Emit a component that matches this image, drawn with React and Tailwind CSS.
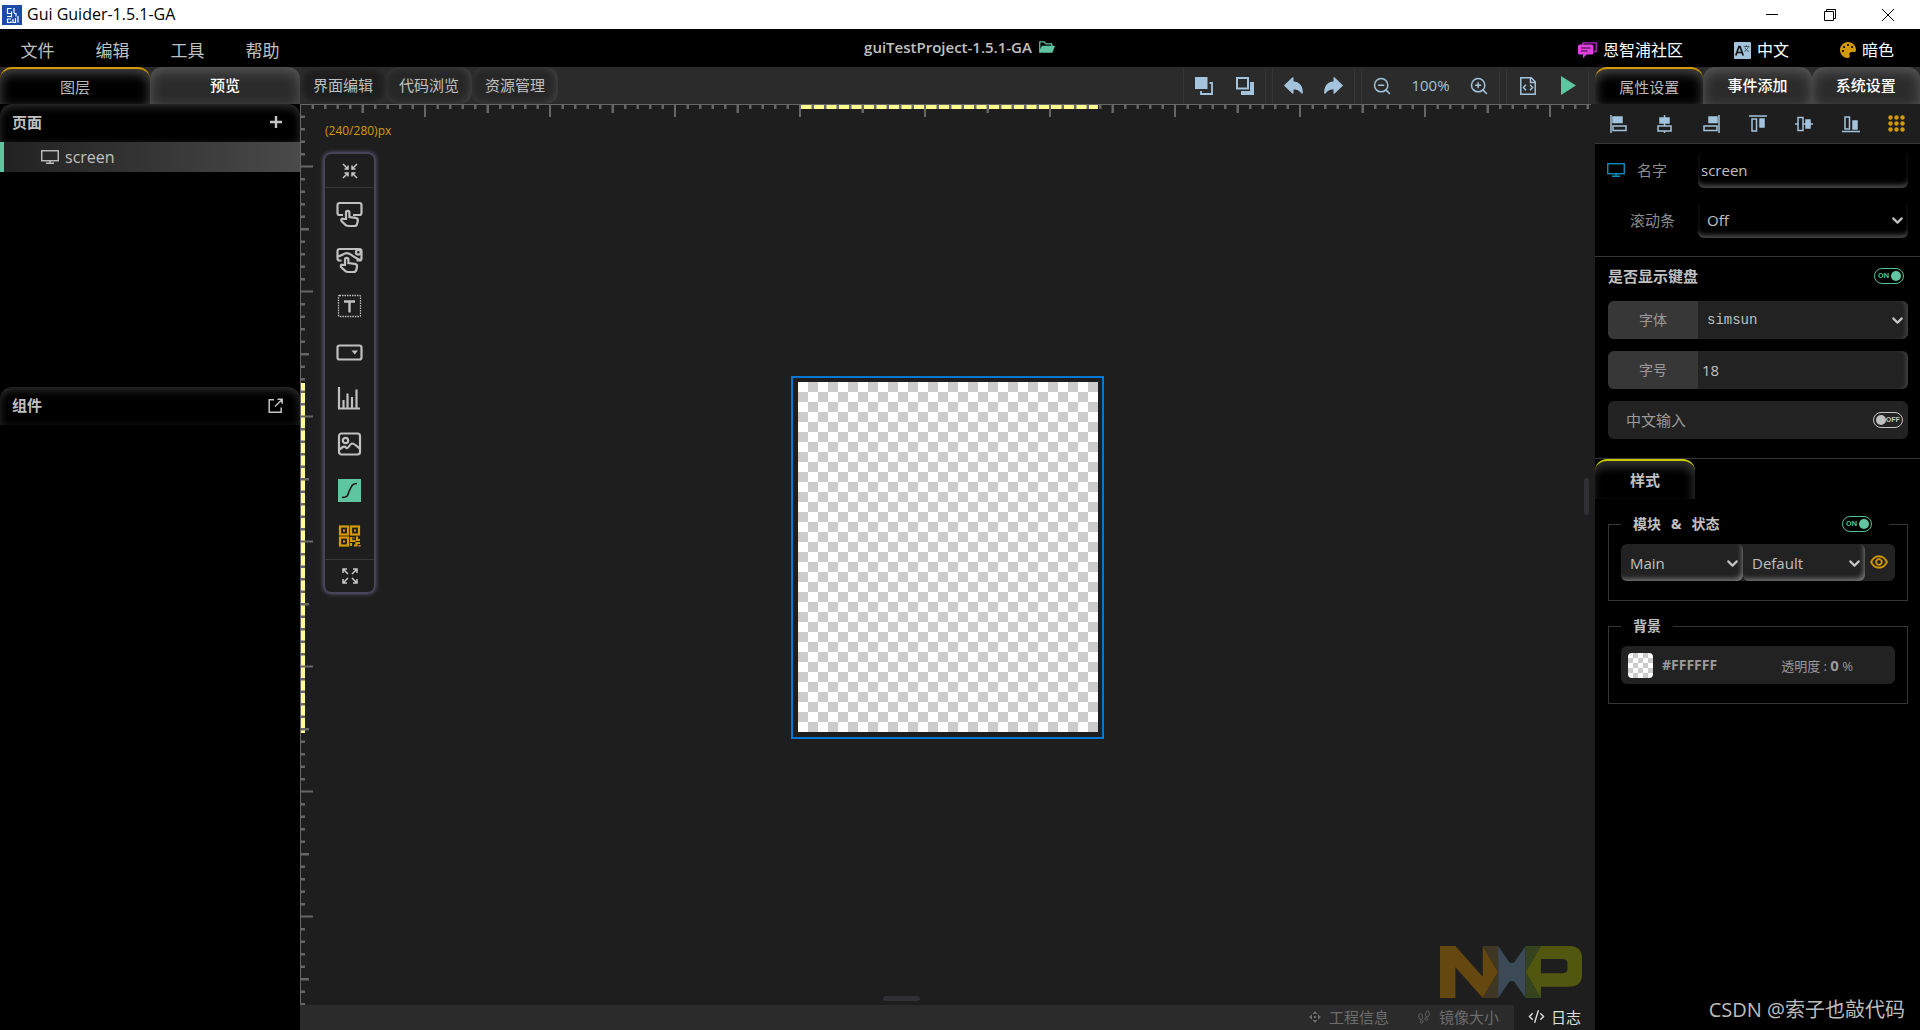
import React, { useState } from 'react';
import { FaPalette } from 'react-icons/fa';
import { AiFillFolderOpen, AiOutlineEye } from 'react-icons/ai';
import { IoArrowUndo, IoArrowRedo, IoFootstepsOutline } from 'react-icons/io5';
import { ChevronDown, CodeXml, ZoomIn, ZoomOut } from 'lucide-react';

const checker = 'bg-[repeating-conic-gradient(#cccccc_0_25%,#ffffff_0_50%)]';

const MonitorIcon = ({ className }) => (
  <svg className={className} width="18" height="14" viewBox="0 0 18 14" fill="none" stroke="currentColor">
    <rect x="0.75" y="0.75" width="16.5" height="10" strokeWidth="1.4" />
    <path d="M9 11v2M5 13.3h8" strokeWidth="1.4" />
  </svg>
);

const ChatIcon = () => (
  <svg width="19" height="17" viewBox="0 0 19 17">
    <path d="M5 3V.8h13.2v8.7H16" fill="none" stroke="#c026d3" strokeWidth="1.3" />
    <path d="M1.500 2.500h12.500a1.500 1.500 0 0 1 1.500 1.500v7a1.500 1.500 0 0 1-1.500 1.500H8.500L5 16.200v-3.700H1.500A1.500 1.500 0 0 1 0 11V4a1.500 1.500 0 0 1 1.500-1.500z" fill="#e040e0" />
    <path d="M3 6h9.500M3 9h6.500" stroke="#2b0a2b" strokeWidth="1.200" />
  </svg>
);

const LanguageIcon = () => (
  <svg width="17" height="17" viewBox="0 0 17 17">
    <rect width="17" height="17" rx="1" fill="#a3c4dc" />
    <path d="M1.800 13.500 5 4.500h1l3.200 9M3 10.500h5" fill="none" stroke="#111" strokeWidth="1.700" />
    <path d="M9.500 4.500h6M12.500 3v1.500M14.500 4.500c-.8 2.500-2 4-4.300 5M10.800 5.500c.8 2 2.300 3.300 4.500 4" fill="none" stroke="#33424d" strokeWidth=".8" />
  </svg>
);

const AppIcon = () => (
  <svg width="20" height="20" viewBox="0 0 20 20">
    <rect width="20" height="20" fill="#1c4aa8" />
    <path d="M9.500 3.500H5.500v5h4v-2M5 11.500h4.500M9.500 8.500v4M12 3v5M12 8.500h2v3M9 14H5.500v3.500H9V16M11 14v3.500h2.500V13M16 11v6.500" fill="none" stroke="#fff" strokeWidth="1.200" />
  </svg>
);

const ToFront = () => (
  <svg width="18" height="18" viewBox="0 0 18 18">
    <path d="M14.500 6H17v11H6v-3" fill="none" stroke="#a3c4dc" strokeWidth="1.800" />
    <rect width="12.500" height="12" fill="#a3c4dc" />
  </svg>
);

const ToBack = () => (
  <svg width="18" height="18" viewBox="0 0 18 18">
    <path d="M14 5h4v13H5v-4h9z" fill="#a3c4dc" />
    <rect x="1" y="1" width="11" height="10.500" fill="#2b2b2b" stroke="#a3c4dc" strokeWidth="2" />
  </svg>
);

const FileCodeIcon = () => (
  <svg width="16" height="18" viewBox="0 0 16 18" fill="none" stroke="#a3c4dc" strokeWidth="1.500">
    <path d="M.8.8h10.400l4 4v12.400H.8zM10.500 1v4.500H15M6 7.800 3.500 10.500 6 13.200M10 7.800l2.500 2.700L10 13.200" />
  </svg>
);

const ExportIcon = () => (
  <svg width="15" height="15" viewBox="0 0 15 15" fill="none" stroke="#c4c4c4" strokeWidth="1.500">
    <path d="M6 1.800H1.200v12.400h12V9.500M7 8.500 13.500 2M9.500 1.200h4.700v4.500" />
  </svg>
);

/* alignment icons of the property panel */
const alignIcons = [
  { id: 'left', draw: <><path d="M1 0v18" /><rect x="3" y="2" width="9" height="5.500" fill="currentColor" /><rect x="3" y="11" width="13" height="4.500" /></> },
  { id: 'hcenter', draw: <><path d="M8.500 0v3M8.500 8v3M8.500 16v2" /><rect x="4" y="3" width="9" height="5" fill="currentColor" /><rect x="2" y="11" width="13" height="5" /></> },
  { id: 'right', draw: <><path d="M16 0v18" /><rect x="6" y="2" width="8" height="5.500" fill="currentColor" /><rect x="1" y="11" width="13" height="4.500" /></> },
  { id: 'top', draw: <><path d="M0 1h18" /><rect x="3" y="4" width="4.500" height="12" /><rect x="11" y="4" width="4" height="8" fill="currentColor" /></> },
  { id: 'vcenter', draw: <><path d="M0 9h3M8 9h3M15 9h3" /><rect x="3" y="2.500" width="5" height="13" /><rect x="11" y="5" width="4" height="8" fill="currentColor" /></> },
  { id: 'bottom', draw: <><path d="M0 16.500h18" /><rect x="3" y="2" width="4.500" height="12" /><rect x="11" y="6" width="4" height="8" fill="currentColor" /></> },
];

const widgetIcons = [
  { id: 'button', label: 'Button', draw: <><path d="M7 14H3.500a2 2 0 0 1-2-2V4a2 2 0 0 1 2-2h20a2 2 0 0 1 2 2v8a2 2 0 0 1-2 2H17" /><path d="M10 18V11.500a1.700 1.700 0 0 1 3.400 0v4.500l6.200.8c2 .3 2.400 1.600 2.200 3l-.6 2.700c-.3 1.600-1.200 2.500-2.700 2.500h-6c-2 0-3-.6-4-2L5.500 20c-1-1.500.6-2.800 2-2z" /></> },
  { id: 'imgbtn', label: 'Image button', draw: <><path d="M5.500 13.500H3.500a2 2 0 0 1-2-2V4a2 2 0 0 1 2-2h20a2 2 0 0 1 2 2v7.500a2 2 0 0 1-2 2H20.500M2 9.500c3.500-.5 6-3.500 9-3.300 4.500.3 8.500 6 14 6.800" /><circle cx="22.300" cy="5.300" r="2.400" /><path d="M9 18V12.500a1.700 1.700 0 0 1 3.400 0V16l6.400.8c2 .3 2.400 1.600 2.200 3l-.6 2.700c-.3 1.600-1.200 2.500-2.700 2.500h-5.500c-2 0-3-.6-4-2L5 20c-1-1.500.6-2.800 2-2z" /></> },
  { id: 'label', label: 'Label', draw: <><rect x="2.500" y="2.500" width="22" height="21" strokeWidth="1.300" strokeDasharray="1.500 1" rx="1" /><path d="M8 8.500h11M13.500 8.500V19.500" strokeWidth="2.400" /></> },
  { id: 'dropdown', label: 'Drop-down', draw: <><rect x="1.500" y="6.500" width="24" height="14" rx="2" /><path d="M15.500 11.500h6.500l-3.200 4z" fill="currentColor" stroke="none" /></> },
  { id: 'chart', label: 'Chart', draw: <path d="M3 2v21M2 23.500h22M7.500 23v-8M11.500 23V8.500M16 23V12M20.500 23V4.500" /> },
  { id: 'image', label: 'Image', draw: <><rect x="3" y="2.500" width="21" height="21" rx="2.500" /><circle cx="9.500" cy="9.500" r="2.700" /><path d="M4 18.500c2-2.500 4.500-4 6.500-1.500 2 1 3-4 5.500-4.500 2.500-.3 5 3 7.500 5" /></> },
  { id: 'line', label: 'Line', draw: <><rect x="2" y="2" width="23" height="23" fill="#5fc4a0" stroke="none" /><path d="M6 20.500c7 0 5.500-3.500 7.500-7s2-7 7.500-7" stroke="#111" strokeWidth="1.500" /></> },
  {
    id: 'qrcode', label: 'QR code', draw: (
      <g stroke="#d49a06">
        <rect x="4" y="3.500" width="8" height="8" /><rect x="15" y="3.500" width="8" height="8" /><rect x="4" y="14.500" width="8" height="8" />
        <path d="M7 7.500h2M18 7.500h2M7 18.500h2M15 14v4h4.500M17.500 14.500v1M21 13.500v3.500h3M15 23v-3M18 22.500h2.500v-2.500H24M23.500 23.500v-1.500" />
      </g>
    ),
  },
];

const ArrowsIn = () => (
  <svg width="16" height="16" viewBox="0 0 16 16" fill="none" stroke="#c8c8c8" strokeWidth="1.500">
    <path d="M1 1l4.500 4.500M15 1l-4.500 4.500M1 15l4.500-4.500M15 15l-4.500-4.500M2.500 6H6V2.500M13.500 6H10V2.500M2.500 10H6v3.500M13.500 10H10v3.500" />
  </svg>
);

const ArrowsOut = () => (
  <svg width="16" height="16" viewBox="0 0 16 16" fill="none" stroke="#c8c8c8" strokeWidth="1.500">
    <path d="M1.500 1.500 6 6M14.500 1.500 10 6M1.500 14.500 6 10M14.500 14.500 10 10M1 5V1h4M11 1h4v4M1 11v4h4M15 11v4h-4" />
  </svg>
);

const NxpLogo = () => (
  <svg className="absolute right-[13px] bottom-[7px]" width="142" height="52" viewBox="445 78 332 156" preserveAspectRatio="none">
    <path d="M445 78h36l64 92V78l36 78-36 78-64-92v92h-36z" fill="#64480f" />
    <path d="M545 78h36v78zM545 234l36-78v78z" fill="#403624" />
    <path d="M581 78l27 50h10l27-50v156l-27-50h-10l-27 50z" fill="#3c4a58" />
    <path d="M645 78h36l-36 78zM645 156l36 78h-36z" fill="#35441f" />
    <path fillRule="evenodd" d="M681 78h65q31 0 31 36v50q0 36-31 36h-65v34l-36-78zM681 117v43h48q14 0 14-12v-19q0-12-14-12z" fill="#525710" />
  </svg>
);

const tickSize = (i) => (i % 10 === 0 ? 13 : i % 5 === 0 ? 9 : 5);

const Rulers = () => (
  <>
    <svg className="absolute top-0 left-0 w-[calc(100%-4px)] h-3.5">
      <rect width="100%" height="1" fill="#666" />
      <rect x="499" y="1" width="299" height="4" fill="#fffe8c" />
      {Array.from({ length: 160 }, (_, i) => i + 1).map((i) => (
        <rect key={i} x={i * 12.5 - 1} y="0" width={i % 10 === 0 ? 2 : 2.5} height={tickSize(i)} fill="#666" />
      ))}
    </svg>
    <svg className="absolute top-0 left-0 w-3.5 h-full">
      <rect width="1" height="100%" fill="#666" />
      <rect x="1" y="279" width="4" height="350" fill="#fffe8c" />
      {Array.from({ length: 160 }, (_, i) => i + 1).map((i) => (
        <rect key={i} x="0" y={i * 12.5 - 1} width={tickSize(i + 5)} height={(i + 5) % 10 === 0 ? 2 : 2.5} fill="#666" />
      ))}
    </svg>
  </>
);

const Toggle = ({ label, checked, onChange }) => (
  <label className="relative block w-[30px] h-4 shrink-0 cursor-pointer font-[Roboto,sans-serif] text-[8px] leading-none font-semibold">
    <input type="checkbox" aria-label={label} checked={checked} onChange={onChange} className="absolute inset-0 opacity-0" />
    {checked ? (
      <span className="flex items-center justify-between h-4 rounded-full border border-[#4cc490] pl-[3px] pr-0.5 text-[#4cc490]">
        ON
        <span className="size-2.5 rounded-full bg-[#5fc4a0]" />
      </span>
    ) : (
      <span className="flex items-center justify-between h-4 rounded-full border border-[#c4c4c4] px-0.5 text-[#c4c4c4]">
        <span className="size-2.5 rounded-full bg-[#c0c0c0]" />
        OFF
      </span>
    )}
  </label>
);

const Select = ({ id, label, options, className }) => (
  <div className="relative flex-1 min-w-0 h-full">
    <select id={id} aria-label={label} className={`appearance-none w-full h-full bg-transparent pl-[9px] pr-6 text-[#c0c0c0] outline-none ${className}`}>
      {options.map((o) => <option key={o}>{o}</option>)}
    </select>
    <ChevronDown size={17} strokeWidth={3} className="absolute right-0.5 top-1/2 -mt-2 text-[#c4c4c4] pointer-events-none" />
  </div>
);

const SideTab = ({ active, onClick, children }) => (
  <button
    onClick={onClick}
    className={`flex-1 h-[37px] rounded-t-xl text-[15px] leading-5 ${active ? 'border-t-2 border-[#d49a06] bg-black text-[#b8b8b8] shadow-[inset_0_4px_12px_#4a4a4a]' : 'pb-0.5 bg-[#2b2b2b] text-white font-medium shadow-[inset_0_4px_14px_#5a5a5a]'}`}
  >
    {children}
  </button>
);

const App = () => {
  const [sideTab, setSideTab] = useState('图层');
  const [mainTab, setMainTab] = useState('界面编辑');
  const [propTab, setPropTab] = useState('属性设置');
  const [keyboard, setKeyboard] = useState(true);
  const [chinese, setChinese] = useState(false);
  const [styleOn, setStyleOn] = useState(true);

  return (
    <div className="flex flex-col min-h-screen bg-black font-['Open_Sans','Noto_Sans_CJK_SC',sans-serif] text-[15px] leading-5 text-[#c0c0c0]">
      {/* Title bar */}
      <div className="flex items-center h-[29px] bg-white text-black">
        <span className="ml-0.5"><AppIcon /></span>
        <span className="ml-[5px] pb-0.5 text-base leading-5">Gui Guider-1.5.1-GA</span>
        <div className="ml-auto flex items-center gap-[34px] pr-5">
          <button aria-label="Minimize" className="w-6 flex justify-center"><svg width="12" height="12" viewBox="0 0 12 12"><path d="M0 5.500h12" stroke="#000" /></svg></button>
          <button aria-label="Restore" className="w-6 flex justify-center"><svg width="12" height="12" viewBox="0 0 12 12" fill="none" stroke="#000"><path d="M.5 2.500h9v9h-9zM2.500 2.500v-2h9v9h-2" /></svg></button>
          <button aria-label="Close" className="w-6 flex justify-center"><svg width="12" height="12" viewBox="0 0 12 12"><path d="M0 0l12 12M12 0 0 12" stroke="#000" /></svg></button>
        </div>
      </div>

      {/* Menu bar */}
      <header className="grid grid-cols-[1fr_auto_1fr] items-center h-[38px]">
        <nav className="flex pt-1.5 text-[17px]">
          {['文件', '编辑', '工具', '帮助'].map((m) => (
            <button key={m} className="w-[75px]">{m}</button>
          ))}
        </nav>
        <div className="flex items-center gap-1.5 pb-0.5 text-[15px] font-semibold">
          <span>guiTestProject-1.5.1-GA</span>
          <AiFillFolderOpen size={18} className="text-[#5fc4a0]" />
        </div>
        <div className="flex justify-end gap-[51px] pt-1 pr-[26px] text-base text-white">
          <button className="flex items-center gap-1.5"><ChatIcon />恩智浦社区</button>
          <button className="flex items-center gap-1.5"><LanguageIcon />中文</button>
          <button className="flex items-center gap-1.5"><FaPalette size={16} className="text-[#d49a06]" />暗色</button>
        </div>
      </header>

      <div className="flex flex-1">
        {/* Left sidebar */}
        <aside className="w-[300px] shrink-0 flex flex-col">
          <div className="flex bg-[#2b2b2b]">
            {['图层', '预览'].map((t) => (
              <SideTab key={t} active={sideTab === t} onClick={() => setSideTab(t)}>{t}</SideTab>
            ))}
          </div>
          <section className="h-[283px]">
            <div className="flex items-center justify-between h-[38px] pb-0.5 pl-3 pr-[18px] rounded-t-xl shadow-[inset_0_3px_8px_#303030]">
              <h2 className="font-bold">页面</h2>
              <button aria-label="Add page">
                <svg width="12" height="12" viewBox="0 0 12 12"><path d="M6 0v12M0 6h12" stroke="#c4c4c4" strokeWidth="2.400" /></svg>
              </button>
            </div>
            <button className="flex items-center gap-1.5 w-full h-[30px] pl-[37px] border-l-4 border-[#5fc4a0] bg-linear-to-r from-[#222222] to-[#4a4a4a] text-base">
              <MonitorIcon />
              screen
            </button>
          </section>
          <section className="flex-1">
            <div className="flex items-center justify-between h-[38px] pb-0.5 pl-3 pr-[17px] rounded-t-xl shadow-[inset_0_3px_8px_#303030]">
              <h2 className="font-bold">组件</h2>
              <button aria-label="Detach widgets"><ExportIcon /></button>
            </div>
          </section>
        </aside>

        {/* Editor */}
        <main className="flex-1 min-w-0 flex flex-col bg-[#1e1e1e]">
          <div className="flex h-[37px] bg-[#2b2b2b]">
            {['界面编辑', '代码浏览', '资源管理'].map((t) => (
              <button
                key={t}
                onClick={() => setMainTab(t)}
                className={`px-[13px] pb-0.5 rounded-xl text-[15px] ${mainTab === t ? 'bg-[#1e1e1e] shadow-[inset_0_0_8px_#3c3c3c]' : 'bg-[#272727] shadow-[inset_-2px_0_8px_#454545]'}`}
              >
                {t}
              </button>
            ))}
            <div className="ml-auto mr-1.5 flex gap-1.5 text-[#a3c4dc]">
              <div className="flex items-center justify-around w-[83px] border-x border-[#363636]">
                <button aria-label="Bring to front"><ToFront /></button>
                <button aria-label="Send to back"><ToBack /></button>
              </div>
              <div className="flex items-center justify-around w-[83px] border-x border-[#363636]">
                <button aria-label="Undo"><IoArrowUndo size={23} /></button>
                <button aria-label="Redo"><IoArrowRedo size={23} /></button>
              </div>
              <div className="flex items-center justify-between w-[139px] px-2.5 border-x border-[#363636]">
                <button aria-label="Zoom out"><ZoomOut size={20} strokeWidth={1.8} /></button>
                <span className="pb-0.5 text-[15px]">100%</span>
                <button aria-label="Zoom in"><ZoomIn size={20} strokeWidth={1.8} /></button>
              </div>
              <div className="flex items-center justify-around w-[83px] border-x border-[#363636]">
                <button aria-label="Generate code"><FileCodeIcon /></button>
                <button aria-label="Run"><svg width="15" height="19" viewBox="0 0 15 19"><path d="M0 0l15 9.500L0 19z" fill="#5fc4a0" /></svg></button>
              </div>
            </div>
          </div>

          <div className="relative flex-1 flex items-center justify-center pt-1.5">
            <Rulers />
            <p className="absolute left-[25px] top-[17px] text-xs leading-5 text-[#d49a06]">(240/280)px</p>

            <div className="absolute left-[23px] top-12 w-[53px] rounded-lg border-2 border-[#46445a] shadow-[0_0_4px_#5a5870] text-[#c0c0c0]">
              <button aria-label="Collapse" className="flex items-center justify-center w-full h-[34px] border-b border-[#363636]"><ArrowsIn /></button>
              <div className="pt-[3px]">
                {widgetIcons.map((w) => (
                  <button key={w.id} aria-label={w.label} className="flex items-center justify-center w-full h-[46px]">
                    <svg width="27" height="27" viewBox="0 0 27 27" fill="none" stroke="currentColor" strokeWidth="2.200">{w.draw}</svg>
                  </button>
                ))}
              </div>
              <button aria-label="Expand" className="flex items-center justify-center w-full h-[33px] border-t border-[#363636]"><ArrowsOut /></button>
            </div>

            <div className="border-2 border-[#0078d4] pt-1 pl-[5px] pr-1 pb-[5px]">
              <div className={`w-[300px] h-[350px] bg-size-[20px_20px] ${checker}`} />
            </div>

            <div className="absolute right-1.5 top-[374px] w-[5px] h-[37px] rounded-sm bg-[#2f2f34]" />
            <div className="absolute left-[583px] bottom-1 w-[37px] h-[5px] rounded-sm bg-[#2f2f34]" />
            <NxpLogo />
          </div>

          <footer className="flex justify-end h-[25px] bg-[#2b2b2b] text-[15px] text-[#6c6c6c]">
            <button className="flex items-center gap-2 mr-7 pb-0.5">
              <svg width="12" height="12" viewBox="0 0 12 12" fill="currentColor"><path d="M6 0l2.500 3h-5zM6 12l2.500-3h-5zM0 6l3-2.500v5zM12 6 9 3.500v5zM5 5h2v2H5z" /></svg>
              工程信息
            </button>
            <button className="flex items-center gap-2 mr-[15px] pb-0.5"><IoFootstepsOutline size={14} />镜像大小</button>
            <button className="flex items-center gap-1.5 px-3.5 pb-0.5 bg-[#1e1e1e] text-[#dedede]"><CodeXml size={17} />日志</button>
          </footer>
        </main>

        {/* Properties */}
        <aside className="relative w-[325px] shrink-0">
          <div className="flex bg-[#2b2b2b]">
            {['属性设置', '事件添加', '系统设置'].map((t) => (
              <SideTab key={t} active={propTab === t} onClick={() => setPropTab(t)}>{t}</SideTab>
            ))}
          </div>
          <div className="flex items-center justify-between h-10 pl-[15px] pr-[15px] bg-[#1e1e1e] border-b border-[#363636] text-[#a3c4dc]">
            {alignIcons.map((a) => (
              <button key={a.id} aria-label={`Align ${a.id}`}>
                <svg width="18" height="18" viewBox="0 0 18 18" fill="none" stroke="currentColor" strokeWidth="1.500">{a.draw}</svg>
              </button>
            ))}
            <button aria-label="Grid">
              <svg width="17" height="17" viewBox="0 0 17 17" fill="#d49a06">
                {[2.5, 8.5, 14.5].map((y) => [2.5, 8.5, 14.5].map((x) => <circle key={`${x}-${y}`} cx={x} cy={y} r="2.2" />))}
              </svg>
            </button>
          </div>

          <div className="flex flex-col gap-[13px] pt-[7px] pb-[18px] px-3 border-b border-[#363636]">
            <div className="flex items-center h-[37px]">
              <MonitorIcon className="text-[#0b8fbd]" />
              <label htmlFor="name" className="ml-3 flex-1 text-[#8c8c8c]">名字</label>
              <input id="name" defaultValue="screen" className="w-[210px] h-[37px] pl-[3px] rounded-md bg-transparent text-[#c0c0c0] outline-none shadow-[inset_0_-5px_5px_-2px_#4a4a4a]" />
            </div>
            <div className="flex items-center h-[37px]">
              <label htmlFor="scroll" className="pl-[23px] flex-1 text-[#8c8c8c]">滚动条</label>
              <div className="w-[210px] h-[37px] rounded-md shadow-[inset_0_-5px_5px_-2px_#4a4a4a]">
                <Select id="scroll" options={['Off', 'On', 'Auto']} className="text-[15px]" />
              </div>
            </div>
          </div>

          <div className="flex flex-col gap-3 pl-[13px] pr-3 pt-2 pb-[19px] border-b border-[#363636]">
            <div className="flex items-center justify-between h-[22px] mb-0.5 pr-1">
              <h3 className="font-bold">是否显示键盘</h3>
              <Toggle label="是否显示键盘" checked={keyboard} onChange={() => setKeyboard(!keyboard)} />
            </div>
            <div className="flex h-[38px] rounded-md overflow-hidden bg-[#222222] shadow-[inset_-4px_0_4px_-2px_#444444]">
              <label htmlFor="font" className="w-[90px] flex items-center justify-center bg-[#373737] text-sm text-[#9a9a9a]">字体</label>
              <Select id="font" options={['simsun', 'arial']} className="font-['Liberation_Mono',monospace] text-sm" />
            </div>
            <div className="flex h-[38px] rounded-md overflow-hidden bg-[#222222] shadow-[inset_-4px_0_4px_-2px_#444444]">
              <label htmlFor="size" className="w-[90px] flex items-center justify-center bg-[#373737] text-sm text-[#9a9a9a]">字号</label>
              <input id="size" defaultValue="18" className="flex-1 min-w-0 pl-1 bg-transparent text-[#c0c0c0] outline-none" />
            </div>
            <div className="flex items-center justify-between h-[38px] pl-[18px] pr-[5px] rounded-md bg-[#222222] text-[#9a9a9a]">
              <span>中文输入</span>
              <Toggle label="中文输入" checked={chinese} onChange={() => setChinese(!chinese)} />
            </div>
          </div>

          <button className="block w-[100px] h-10 rounded-t-xl border-t-2 border-[#c8cc00] bg-black font-bold shadow-[inset_-2px_6px_10px_#303030]">样式</button>

          <div className="flex flex-col gap-[13px] pl-[13px] pr-3 pt-[13px]">
            <fieldset className="border border-[#363636] px-3 pb-[19px]">
              <legend className="w-[268px] h-6 px-3 text-sm font-bold">
                <span className="flex items-center justify-between h-6 pr-[5px]">
                  <span className="flex gap-2.5"><span>模块</span><span>&amp;</span><span>状态</span></span>
                  <Toggle label="模块 & 状态" checked={styleOn} onChange={() => setStyleOn(!styleOn)} />
                </span>
              </legend>
              <div className="flex items-center h-[37px] mt-2 rounded-md bg-[#222222]">
                <div className="flex-1 h-full rounded-md shadow-[inset_-3px_-4px_5px_-2px_#7a7a7a]">
                  <Select label="模块" options={['Main']} className="text-[15px]" />
                </div>
                <div className="flex-1 h-full rounded-md shadow-[inset_-3px_-4px_5px_-2px_#7a7a7a]">
                  <Select label="状态" options={['Default', 'Focused']} className="text-[15px]" />
                </div>
                <button aria-label="Preview state" className="w-[30px] pr-0.5 pb-0.5 flex justify-center"><AiOutlineEye size={20} stroke="currentColor" strokeWidth={30} className="text-[#d49a06]" /></button>
              </div>
            </fieldset>

            <fieldset className="border border-[#363636] px-3 pb-[19px]">
              <legend className="h-6 px-3 text-sm leading-6 font-bold">背景</legend>
              <div className="flex items-center h-[38px] mt-2 pl-[7px] pr-[42px] rounded-md bg-[#222222] text-[#9a9a9a]">
                <button aria-label="Background colour" className={`size-[25px] rounded-sm bg-size-[10px_10px] ${checker}`} />
                <span className="ml-[9px] text-sm font-bold">#FFFFFF</span>
                <span className="ml-auto text-[13px]">透明度 : <b className="text-[15px]">0</b> %</span>
              </div>
            </fieldset>
          </div>

          <p className="absolute right-[15px] bottom-2 text-[20px] leading-6 text-[#bdbdbd]">CSDN @索子也敲代码</p>
        </aside>
      </div>
    </div>
  );
};

export default App;
